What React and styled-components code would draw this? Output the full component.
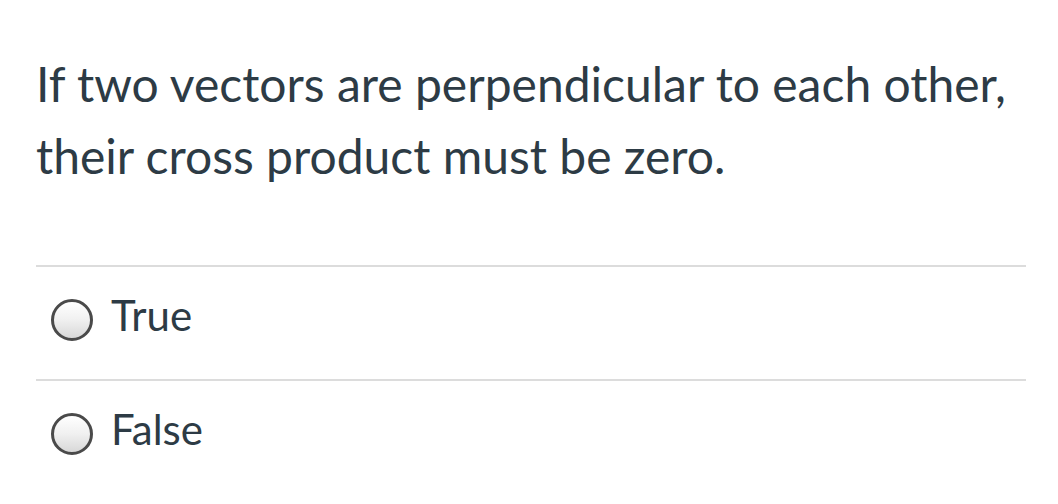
import React from "react";
import styled, { createGlobalStyle } from "styled-components";

const Global = createGlobalStyle`
  html, body { margin: 0; padding: 0; background: #fff; }
  body { font-family: Lato, "Open Sans", sans-serif; color: #2d3b45; }
`;

const Page = styled.div`
  padding: 48px 32px 0 36px;
`;

const Question = styled.p`
  margin: 0 0 73px 0;
  font-size: 48px;
  line-height: 72px;
  color: #2d3b45;
`;

const Answers = styled.div`
  display: flex;
  flex-direction: column;
`;

const Row = styled.label`
  display: flex;
  align-items: center;
  height: 112px;
  border-top: 2px solid #dcdcdc;
  padding-left: 15px;
  gap: 18px;
  font-size: 42px;
  color: #2d3b45;
`;

const Radio = styled.span`
  box-sizing: border-box;
  width: 42px;
  height: 42px;
  margin-bottom: 6px;
  border-radius: 50%;
  border: 3px solid #4a4a4a;
  background: linear-gradient(180deg, #ffffff 0%, #f0f0f0 50%, #d8d8d8 100%);
  flex: none;
`;

const Label = styled.span`
  line-height: 1;
  margin-bottom: 16px;
`;

export default function App() {
  return (
    <>
      <Global />
      <Page>
        <Question>
          If two vectors are perpendicular to each other,
          <br />
          their cross product must be zero.
        </Question>
        <Answers>
          {["True", "False"].map((a) => (
            <Row key={a}>
              <Radio />
              <Label>{a}</Label>
            </Row>
          ))}
        </Answers>
      </Page>
    </>
  );
}
